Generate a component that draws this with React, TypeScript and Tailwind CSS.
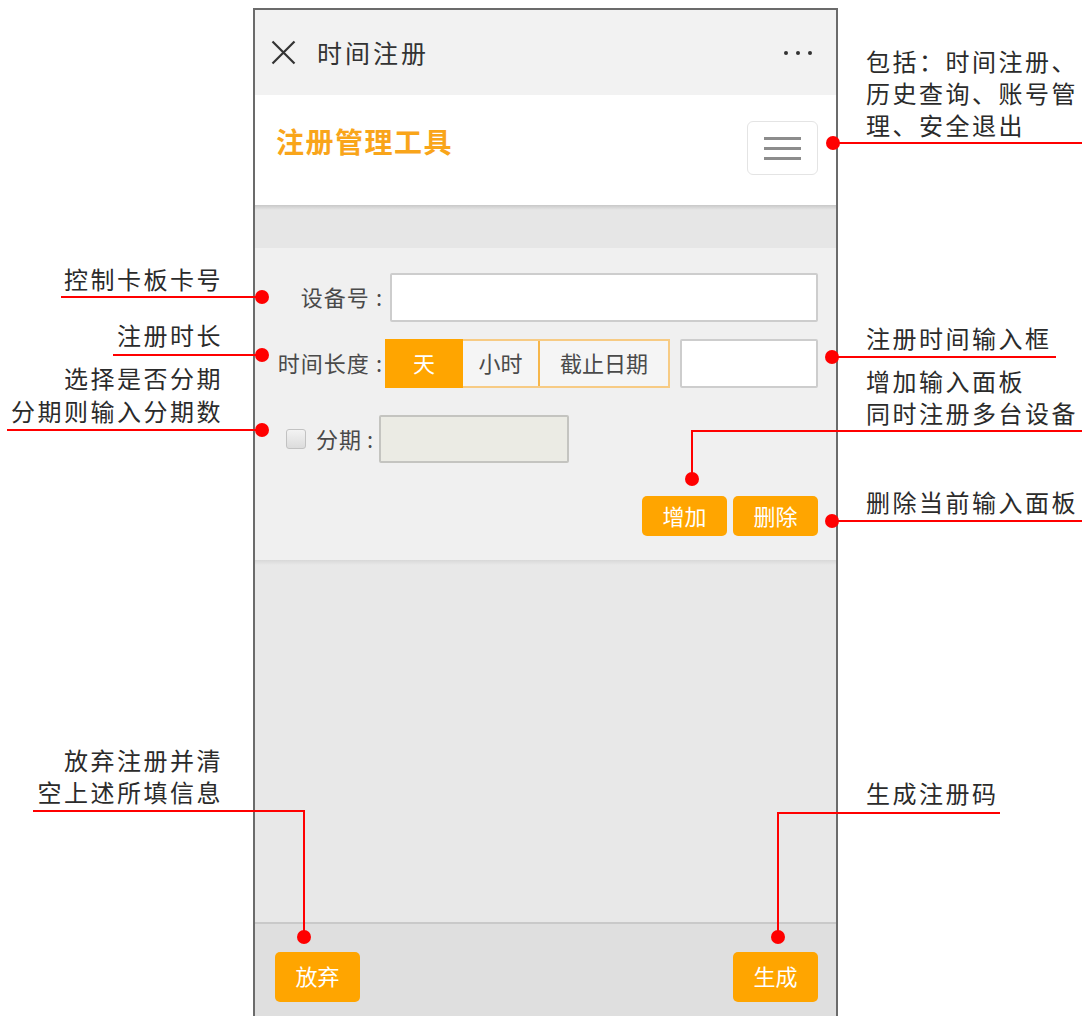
import React from 'react';

const App: React.FC = () => {
  return (
    <div className="relative w-[1082px] h-[1016px] overflow-hidden bg-white font-['Noto_Sans_CJK_SC','Noto_Sans',sans-serif]">
      {/* Phone mockup */}
      <div className="ml-[253px] mt-[8px] w-[585px] h-[1008px] border-2 border-b-0 border-[#6b6b6b] flex flex-col bg-[#e8e8e8]">
        {/* Title bar */}
        <div className="h-[85px] shrink-0 bg-[#f2f2f2] flex items-center pl-[16px] pr-[24px]">
          <svg width="25" height="25" viewBox="0 0 25 25" className="shrink-0">
            <path d="M1.5 1.5L23.5 23.5M23.5 1.5L1.5 23.5" stroke="#333" strokeWidth="2.2" fill="none" />
          </svg>
          <span className="ml-[21px] text-[25px] tracking-[3px] text-[#333] leading-none">时间注册</span>
          <div className="ml-auto flex gap-[8px]">
            <span className="w-[4px] h-[4px] rounded-full bg-[#333]" />
            <span className="w-[4px] h-[4px] rounded-full bg-[#333]" />
            <span className="w-[4px] h-[4px] rounded-full bg-[#333]" />
          </div>
        </div>

        {/* App header */}
        <div className="h-[110px] shrink-0 bg-white flex items-center justify-between pl-[21px] pr-[18px]">
          <span className="text-[28px] font-bold tracking-[1.5px] text-[#f9a51a] leading-none -mt-[18px]">注册管理工具</span>
          <button className="w-[71px] h-[54px] -mt-[4px] rounded-md border border-[#e4e4e4] bg-white flex flex-col items-center justify-center gap-[7px]">
            <span className="w-[37px] h-[3px] bg-[#8c8c8c]" />
            <span className="w-[37px] h-[3px] bg-[#8c8c8c]" />
            <span className="w-[37px] h-[3px] bg-[#8c8c8c]" />
          </button>
        </div>
        <div className="h-[5px] shrink-0 bg-gradient-to-b from-[#c8c8c8] to-[#e6e6e6]" />
        <div className="h-[38px] shrink-0 bg-[#e6e6e6]" />

        {/* Form panel */}
        <div className="h-[312px] shrink-0 bg-[#f0f0f0] pt-[25px] pl-[20px] pr-[18px] text-[22px] text-[#4a4a4a]">
          <div className="flex items-center h-[49px]">
            <div className="w-[108px] text-right leading-none tracking-[1px] -mt-[4px]">
              设备号<span className="ml-[6px]">:</span>
            </div>
            <div className="ml-[7px] flex-1 h-full bg-white border-2 border-[#cdcdcd] rounded-[2px]" />
          </div>

          <div className="mt-[17px] flex items-center h-[49px]">
            <div className="w-[108px] text-right leading-none whitespace-nowrap tracking-[1px] -mt-[4px]">
              时间长度<span className="ml-[6px]">:</span>
            </div>
            <div className="ml-[2px] w-[285px] h-full flex border-2 border-[#f7cb84] bg-[#f5f5f5]">
              <div className="w-[78px] -ml-[2px] -my-[2px] pb-[3px] bg-[#ffa500] text-white flex items-center justify-center">天</div>
              <div className="w-[75px] pb-[3px] flex items-center justify-center">小时</div>
              <div className="flex-1 pb-[3px] border-l-2 border-[#f6b64a] flex items-center justify-center">截止日期</div>
            </div>
            <div className="ml-[10px] flex-1 h-full bg-white border-2 border-[#cdcdcd] rounded-[2px]" />
          </div>

          <div className="mt-[27px] flex items-center h-[48px]">
            <div className="ml-[11px] w-[20px] h-[20px] rounded-[3px] border border-[#c2c2c2] bg-gradient-to-b from-[#f3f3f3] to-[#dcdcdc]" />
            <div className="ml-[10px] leading-none tracking-[1px] -mt-[2px]">
              分期<span className="ml-[5px]">:</span>
            </div>
            <div className="ml-[5px] w-[190px] h-full bg-[#ebebe4] border-2 border-[#c4c4c0] rounded-[2px]" />
          </div>

          <div className="mt-[33px] flex justify-end gap-[6px]">
            <button className="w-[85px] h-[40px] pb-[3px] rounded-[5px] bg-[#ffa500] text-white text-[22px] leading-none">增加</button>
            <button className="w-[85px] h-[40px] pb-[3px] rounded-[5px] bg-[#ffa500] text-white text-[22px] leading-none">删除</button>
          </div>
        </div>
        <div className="h-[5px] shrink-0 bg-gradient-to-b from-[#d8d8d8] to-[#e8e8e8]" />
        <div className="flex-1 bg-[#e8e8e8]" />

        {/* Footer */}
        <div className="h-[94px] shrink-0 border-t-2 border-[#c9c9c9] bg-[#dfdfdf] pt-[28px] pl-[20px] pr-[18px] flex justify-between items-start">
          <button className="w-[85px] h-[50px] pb-[4px] rounded-[5px] bg-[#ffa500] text-white text-[22px] leading-none">放弃</button>
          <button className="w-[85px] h-[50px] pb-[4px] rounded-[5px] bg-[#ffa500] text-white text-[22px] leading-none">生成</button>
        </div>
      </div>

      {/* Callouts: left */}
      <div className="absolute left-0 top-[262px] w-[223px] text-right text-[24px] leading-[33px] tracking-[2.5px] text-[#2b2b2b]">控制卡板卡号</div>
      <div className="absolute left-[61px] top-[296px] w-[201px] h-[2px] bg-[#ff0000]" />
      <div className="absolute left-[255px] top-[290px] w-[14px] h-[14px] rounded-full bg-[#ff0000]" />

      <div className="absolute left-0 top-[318px] w-[223px] text-right text-[24px] leading-[33px] tracking-[2.5px] text-[#2b2b2b]">注册时长</div>
      <div className="absolute left-[113px] top-[354px] w-[149px] h-[2px] bg-[#ff0000]" />
      <div className="absolute left-[255px] top-[348px] w-[14px] h-[14px] rounded-full bg-[#ff0000]" />

      <div className="absolute left-0 top-[361px] w-[223px] text-right text-[24px] leading-[33px] tracking-[2.5px] text-[#2b2b2b]">
        <div>选择是否分期</div>
        <div>分期则输入分期数</div>
      </div>
      <div className="absolute left-[7px] top-[429px] w-[255px] h-[2px] bg-[#ff0000]" />
      <div className="absolute left-[255px] top-[423px] w-[14px] h-[14px] rounded-full bg-[#ff0000]" />

      <div className="absolute left-0 top-[744px] w-[223px] text-right text-[24px] leading-[32px] tracking-[2.5px] text-[#2b2b2b]">
        <div>放弃注册并清</div>
        <div>空上述所填信息</div>
      </div>
      <div className="absolute left-[33px] top-[810px] w-[272px] h-[2px] bg-[#ff0000]" />
      <div className="absolute left-[303px] top-[810px] w-[2px] h-[127px] bg-[#ff0000]" />
      <div className="absolute left-[297px] top-[930px] w-[14px] h-[14px] rounded-full bg-[#ff0000]" />

      {/* Callouts: right */}
      <div className="absolute left-[866px] top-[45px] text-[24px] leading-[32px] tracking-[2.5px] text-[#2b2b2b] whitespace-nowrap">
        <div>包括：时间注册、</div>
        <div>历史查询、账号管</div>
        <div>理、安全退出</div>
      </div>
      <div className="absolute left-[833px] top-[142px] w-[249px] h-[2px] bg-[#ff0000]" />
      <div className="absolute left-[826px] top-[136px] w-[14px] h-[14px] rounded-full bg-[#ff0000]" />

      <div className="absolute left-[866px] top-[321px] text-[24px] leading-[33px] tracking-[2.5px] text-[#2b2b2b] whitespace-nowrap">注册时间输入框</div>
      <div className="absolute left-[832px] top-[356px] w-[224px] h-[2px] bg-[#ff0000]" />
      <div className="absolute left-[825px] top-[350px] w-[14px] h-[14px] rounded-full bg-[#ff0000]" />

      <div className="absolute left-[866px] top-[365px] text-[24px] leading-[32px] tracking-[2.5px] text-[#2b2b2b] whitespace-nowrap">
        <div>增加输入面板</div>
        <div>同时注册多台设备</div>
      </div>
      <div className="absolute left-[691px] top-[430px] w-[391px] h-[2px] bg-[#ff0000]" />
      <div className="absolute left-[691px] top-[430px] w-[2px] h-[49px] bg-[#ff0000]" />
      <div className="absolute left-[685px] top-[472px] w-[14px] h-[14px] rounded-full bg-[#ff0000]" />

      <div className="absolute left-[866px] top-[485px] text-[24px] leading-[33px] tracking-[2.5px] text-[#2b2b2b] whitespace-nowrap">删除当前输入面板</div>
      <div className="absolute left-[832px] top-[520px] w-[250px] h-[2px] bg-[#ff0000]" />
      <div className="absolute left-[825px] top-[514px] w-[14px] h-[14px] rounded-full bg-[#ff0000]" />

      <div className="absolute left-[866px] top-[776px] text-[24px] leading-[33px] tracking-[2.5px] text-[#2b2b2b] whitespace-nowrap">生成注册码</div>
      <div className="absolute left-[777px] top-[812px] w-[223px] h-[2px] bg-[#ff0000]" />
      <div className="absolute left-[777px] top-[812px] w-[2px] h-[125px] bg-[#ff0000]" />
      <div className="absolute left-[771px] top-[930px] w-[14px] h-[14px] rounded-full bg-[#ff0000]" />
    </div>
  );
};

export default App;
